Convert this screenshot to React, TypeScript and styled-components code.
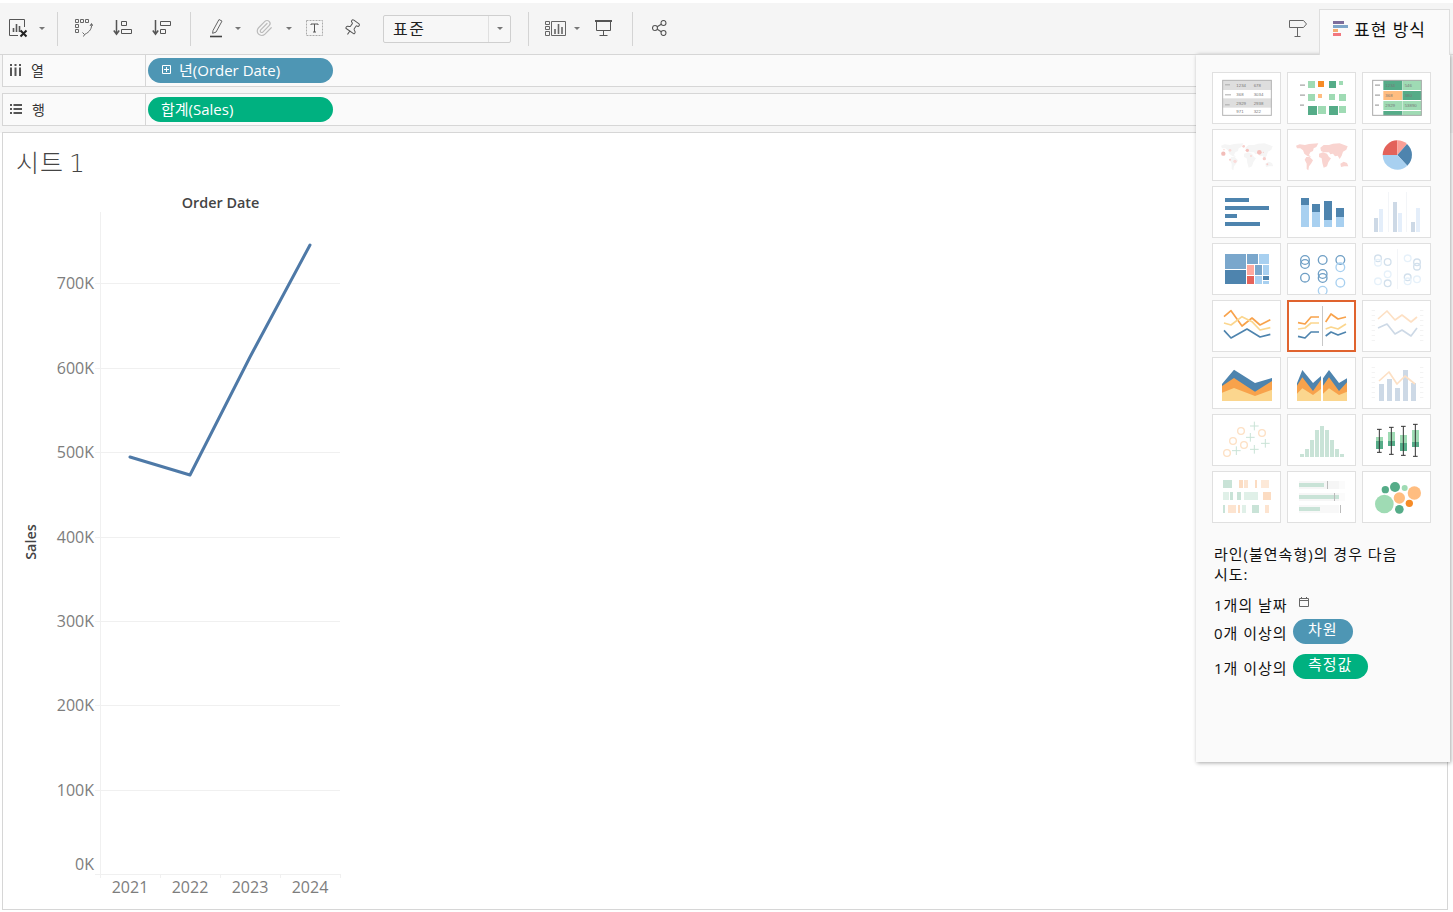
import React from "react";
import styled, { createGlobalStyle } from "styled-components";
import { Paperclip, Pin } from "lucide-react";

const FONT = `"Open Sans", "Noto Sans CJK KR", sans-serif`;
const BLUE = "#4e96b4";
const GREEN = "#00b180";
const LINE = "#d6d6d6";

const GlobalStyle = createGlobalStyle`
    html, body {
        margin: 0;
        padding: 0;
        background: #fff;
    }
    body {
        font-family: ${FONT};
        color: #222;
    }
`;

// tile artwork is traced at 3x, so every viewBox below is in 3x units
function Tile({ ox, oy, selected, children }: { ox: number; oy: number; selected?: boolean; children: React.ReactNode }) {
    return (
        <TileBox $selected={selected}>
            <svg width="67" height="50" viewBox={`${ox + 3} ${oy + 3} 201 150`}>{children}</svg>
        </TileBox>
    );
}

type Rect = [number, number, number, number, string];
const Rects = ({ items }: { items: Rect[] }) => (
    <>
        {items.map(([x, y, w, h, c], i) => (
            <rect key={i} x={x} y={y} width={w} height={h} fill={c} />
        ))}
    </>
);

const Poly = ({ d, c, w = 5 }: { d: string; c: string; w?: number }) => (
    <polyline points={d} fill="none" stroke={c} strokeWidth={w} strokeLinejoin="round" />
);

const Rings = ({ items, c, r = 13 }: { items: [number, number][]; c: string; r?: number }) => (
    <>
        {items.map(([x, y], i) => (
            <circle key={i} cx={x} cy={y} r={r} fill="none" stroke={c} strokeWidth="4" />
        ))}
    </>
);

const Dots = ({ items }: { items: [number, number, number, string][] }) => (
    <>
        {items.map(([x, y, r, c], i) => (
            <circle key={i} cx={x} cy={y} r={r} fill={c} />
        ))}
    </>
);

const SideTicks = ({ top }: { top: number }) => (
    <>
        {[0, 1, 2, 3, 4, 5, 6].map((i) => (
            <g key={i}>
                <rect x={500} y={top + i * 15} width="10" height="2" fill="#eee" />
                <rect x={645} y={top + i * 15} width="10" height="2" fill="#eee" />
            </g>
        ))}
    </>
);

const World = ({ c, dx }: { c: string; dx: number }) => (
    <g fill={c} transform={`translate(${dx} 0)`}>
        <polygon points="273,242 284,238 300,240 312,237 340,235 334,246 326,250 324,258 316,262 312,270 318,276 308,274 298,266 294,256 286,250 276,250" />
        <polygon points="304,276 314,276 324,286 318,296 312,304 310,316 305,312 305,296 299,284" />
        <polygon points="346,248 356,240 372,240 384,236 404,235 428,244 424,254 414,260 410,272 404,282 398,272 390,274 384,266 376,268 372,262 356,262 348,258" />
        <polygon points="342,266 354,262 366,266 372,276 378,280 370,292 366,304 356,308 352,294 350,280 342,276" />
        <polygon points="406,296 416,290 426,294 430,304 418,304 408,306" />
    </g>
);

const TableText = styled.text`
    font-family: "Liberation Sans", sans-serif;
    font-size: 13px;
    fill: #777;
`;

function CrossMark({ x, y }: { x: number; y: number }) {
    return <path d={`M${x - 13} ${y}h26M${x} ${y - 13}v26`} stroke="#c9e3d7" strokeWidth="3" fill="none" />;
}

function Thumbnails() {
    const o = "#f8a24b";
    const y = "#fbd68e";
    const b = "#4e84ae";
    const peach = "#fde0c4";
    const fade = "#cdd9e6";
    const gl = "#9fdbb4";
    const gd = "#55ac88";
    const sl = "#c9e3d7";
    const sf = "#e0f0e8";
    return (
        <TileGrid>
            <Tile ox={21} oy={21}>
                <Rects items={[[52, 45, 148, 30, "#dedede"], [52, 100, 148, 28, "#dedede"], [60, 58, 15, 3, "#aaa"], [60, 88, 18, 3, "#aaa"], [60, 118, 14, 3, "#aaa"]]} />
                <rect x="53" y="46" width="146" height="105" fill="none" stroke="#b4b4b4" strokeWidth="3" />
                <TableText x="94" y="66">1234</TableText>
                <TableText x="146" y="66">678</TableText>
                <TableText x="94" y="93">368</TableText>
                <TableText x="146" y="93">3034</TableText>
                <TableText x="94" y="120">2929</TableText>
                <TableText x="146" y="120">2938</TableText>
                <TableText x="94" y="144">971</TableText>
                <TableText x="146" y="144">322</TableText>
            </Tile>
            <Tile ox={246} oy={21}>
                <Rects items={[[285, 58, 15, 5, "#bbb"], [285, 88, 15, 5, "#bbb"], [285, 118, 12, 5, "#bbb"], [309, 48, 21, 21, gl], [339, 48, 18, 18, "#f68b26"], [372, 48, 21, 21, gd], [402, 48, 12, 12, gl], [309, 87, 21, 21, gl], [339, 87, 12, 12, "#ffbd80"], [372, 87, 18, 18, gl], [402, 87, 21, 21, gl], [309, 123, 27, 27, gd], [339, 123, 24, 24, gl], [372, 123, 27, 27, gd], [402, 123, 21, 21, gl]]} />
            </Tile>
            <Tile ox={471} oy={21}>
                <Rects items={[[535, 45, 57, 30, gd], [593, 45, 57, 30, gl], [535, 78, 57, 27, "#ffbd80"], [593, 78, 57, 27, gd], [535, 108, 57, 27, gl], [593, 108, 57, 27, gl], [535, 138, 57, 14, gd], [593, 138, 57, 14, gl], [510, 58, 15, 5, "#bbb"], [510, 88, 15, 5, "#bbb"], [510, 118, 12, 5, "#bbb"]]} />
                <rect x="503" y="46" width="146" height="105" fill="none" stroke="#aaa" strokeWidth="3" />
                <TableText x="541" y="66">1234</TableText>
                <TableText x="599" y="66">546</TableText>
                <TableText x="541" y="97">368</TableText>
                <TableText x="599" y="97">380</TableText>
                <TableText x="541" y="126">2929</TableText>
                <TableText x="599" y="126">53890</TableText>
            </Tile>
            <Tile ox={21} oy={192}>
                <World c="#f5f5f5" dx={-225} />
                <Dots items={[[55, 266, 6.5, "#f2bdb9"], [75, 256, 4, "#f9d9d6"], [116, 244, 4, "#f7cfcc"], [127, 256, 5, "#f5c0bc"], [163, 262, 7, "#f5c0bc"], [178, 281, 5, "#f7cfcc"], [138, 273, 3, "#f9d9d6"], [75, 284, 3, "#f7cfcc"], [90, 289, 5, "#fbdcda"], [187, 298, 3, "#f7cfcc"], [57, 254, 2, "#f7cfcc"], [175, 262, 2, "#f7cfcc"]]} />
            </Tile>
            <Tile ox={246} oy={192}>
                <World c="#f9d4d0" dx={0} />
            </Tile>
            <Tile ox={471} oy={192}>
                <path d="M577 270L577 226A44 44 0 0 0 533 270Z" fill="#e3625a" />
                <path d="M577 270L577 226A44 44 0 0 1 606 237Z" fill="#fb9f96" />
                <path d="M577 270L606 237A44 44 0 0 1 607 302Z" fill="#4e84ae" />
                <path d="M577 270L607 302A44 44 0 0 1 533 270Z" fill="#a8d0f0" />
            </Tile>
            <Tile ox={21} oy={18}>
                <Rects items={[[60, 54, 72, 12, b], [60, 78, 132, 12, b], [60, 102, 36, 12, b], [60, 126, 105, 12, b]]} />
            </Tile>
            <Tile ox={246} oy={18}>
                <Rects items={[[288, 54, 24, 21, b], [288, 75, 24, 66, "#a8d0f0"], [321, 72, 24, 24, b], [321, 96, 24, 45, "#a8d0f0"], [357, 63, 24, 57, b], [357, 120, 24, 21, "#a8d0f0"], [393, 84, 24, 27, b], [393, 111, 24, 30, "#a8d0f0"]]} />
            </Tile>
            <Tile ox={471} oy={18}>
                <Rects items={[[507, 114, 12, 42, fade], [522, 87, 12, 69, "#e4eefa"], [549, 36, 2, 120, "#eef1f5"], [564, 66, 12, 90, fade], [579, 99, 12, 57, "#e4eefa"], [603, 36, 2, 120, "#eef1f5"], [618, 126, 12, 30, fade], [633, 84, 12, 72, "#e4eefa"]]} />
            </Tile>
            <Tile ox={21} oy={189}>
                <Rects items={[[60, 222, 63, 45, "#7aa7cc"], [60, 270, 63, 42, b], [126, 222, 33, 30, "#7aa7cc"], [162, 222, 30, 30, "#a8d0f0"], [126, 255, 21, 30, "#ffa99e"], [150, 255, 21, 30, "#7aa7cc"], [174, 255, 18, 30, "#a8d0f0"], [126, 288, 21, 24, "#e5635a"], [150, 288, 21, 24, "#a8d0f0"], [174, 288, 18, 12, b], [174, 303, 18, 9, "#a8d0f0"]]} />
            </Tile>
            <Tile ox={246} oy={189}>
                <Rings c="#6f9fc5" items={[[300, 240], [300, 252], [353, 240], [353, 282], [353, 294], [300, 293], [406, 240]]} />
                <Rings c="#a8d0f0" items={[[406, 262], [353, 332], [406, 308]]} />
            </Tile>
            <Tile ox={471} oy={189}>
                <rect x="576" y="207" width="2" height="120" fill="#eef1f5" />
                <Rings c="#d2e0ec" r={10} items={[[519, 235], [548, 246], [548, 310], [636, 247], [608, 292], [636, 260]]} />
                <Rings c="#e6f1fa" r={10} items={[[519, 248], [548, 283], [519, 304], [608, 235], [608, 304], [636, 298]]} />
            </Tile>
            <Tile ox={21} oy={15}>
                <Poly c={o} d="57,65 78,47 111,93 141,69 165,90 196,74" />
                <Poly c={y} d="57,84 78,90 111,65 141,80 165,105 196,98" />
                <Poly c={b} d="57,106 78,129 126,102 165,126 196,118" />
            </Tile>
            <Tile ox={246} oy={15} selected>
                <rect x="351" y="33" width="3" height="120" fill="#c8c8c8" />
                <Poly c={o} d="279,83 300,87 318,66 342,66" />
                <Poly c={y} d="279,102 300,99 318,84 342,84" />
                <Poly c={b} d="279,124 300,129 318,111 342,111" />
                <Poly c={o} d="362,81 378,57 399,72 423,66" />
                <Poly c={y} d="362,102 378,96 399,102 423,87" />
                <Poly c={b} d="362,123 378,111 399,120 423,111" />
            </Tile>
            <Tile ox={471} oy={15}>
                <SideTicks top={45} />
                <Poly c={peach} d="519,72 546,48 570,75 591,60 618,81 636,66" />
                <Poly c={fade} d="519,99 546,87 570,117 591,105 618,123 636,99" />
            </Tile>
            <Tile ox={21} oy={186}>
                <polygon points="51,267 87,224 150,264 201,249 201,318 51,318" fill={b} />
                <polygon points="51,273 87,249 150,290 201,258 201,318 51,318" fill={o} />
                <polygon points="51,293 87,279 150,303 201,284 201,318 51,318" fill={y} />
            </Tile>
            <Tile ox={246} oy={186}>
                <polygon points="276,265 292,225 324,264 348,243 348,318 276,318" fill={b} />
                <polygon points="276,272 292,247 324,288 348,254 348,318 276,318" fill={o} />
                <polygon points="276,296 292,280 324,300 348,282 348,318 276,318" fill={y} />
                <polygon points="354,250 372,225 402,264 426,250 426,318 354,318" fill={b} />
                <polygon points="354,272 372,247 402,288 426,262 426,318 354,318" fill={o} />
                <polygon points="354,296 372,280 402,300 426,290 426,318 354,318" fill={y} />
            </Tile>
            <Tile ox={471} oy={186}>
                <SideTicks top={216} />
                <Rects items={[[522, 267, 15, 51, fade], [546, 252, 15, 66, fade], [570, 279, 15, 39, fade], [594, 225, 15, 93, fade], [618, 264, 15, 54, fade]]} />
                <Poly c={peach} d="522,258 552,231 576,267 600,243 630,267" />
            </Tile>
            <Tile ox={21} oy={12}>
                <CrossMark x={148} y={48} />
                <CrossMark x={136} y={82} />
                <CrossMark x={181} y={100} />
                <CrossMark x={94} y={122} />
                <CrossMark x={148} y={118} />
                <Rings c={peach} r={10} items={[[108, 63], [171, 69], [84, 93], [117, 105], [66, 129]]} />
            </Tile>
            <Tile ox={246} oy={12}>
                <Rects items={[[285, 132, 12, 9, sl], [300, 117, 12, 24, sl], [315, 90, 12, 51, sl], [330, 60, 12, 81, sl], [345, 48, 12, 93, sl], [360, 60, 12, 81, sl], [375, 90, 12, 51, sl], [390, 117, 12, 24, sl], [405, 132, 12, 9, sl]]} />
            </Tile>
            <Tile ox={471} oy={12}>
                <Rects items={[[513, 81, 21, 12, gl], [513, 93, 21, 24, gd], [549, 66, 21, 27, gl], [549, 93, 21, 15, gd], [585, 75, 21, 24, gl], [585, 99, 21, 24, gd], [621, 60, 21, 36, gl], [621, 96, 21, 15, gd]]} />
                <path d="M516 58h14M523 58v69M516 127h14M552 52h14M559 52v81M552 133h14M588 49h14M595 49v87M588 136h14M624 43h14M631 43v96M624 139h14" stroke="#333" strokeWidth="3" fill="none" />
            </Tile>
            <Tile ox={21} oy={183}>
                <Rects items={[[54, 210, 27, 24, sl], [102, 210, 12, 24, "#fcdcc2"], [117, 210, 12, 24, "#fce4d0"], [150, 210, 6, 24, "#fcdcc2"], [168, 210, 24, 24, "#fde9d8"], [54, 246, 18, 24, sf], [75, 246, 9, 24, sl], [96, 246, 12, 24, sl], [117, 246, 42, 24, sf], [174, 246, 24, 24, "#fcdcc2"], [54, 285, 6, 24, sl], [69, 285, 24, 24, "#fde4d0"], [99, 285, 6, 24, "#fcdcc2"], [111, 285, 12, 24, sf], [141, 285, 21, 24, sl], [180, 285, 12, 24, "#fde4d0"]]} />
            </Tile>
            <Tile ox={246} oy={183}>
                <Rects items={[[282, 213, 120, 24, "#f6f6f6"], [402, 213, 18, 24, "#fbfbfb"], [282, 219, 75, 12, sl], [366, 213, 3, 24, "#bbb"], [282, 249, 120, 24, "#f6f6f6"], [402, 249, 18, 24, "#fbfbfb"], [282, 255, 120, 12, sl], [387, 249, 3, 24, "#bbb"], [282, 285, 120, 24, "#f8f8f8"], [282, 291, 63, 12, sl], [405, 285, 3, 24, "#bbb"]]} />
            </Tile>
            <Tile ox={471} oy={183}>
                <Dots items={[[538, 282, 28, gl], [583, 264, 17, "#ffbd80"], [628, 249, 20, "#ffbd80"], [570, 231, 15, gd], [541, 239, 11, gd], [599, 234, 9, gl], [613, 280, 11, "#f68b26"], [583, 298, 13, gd]]} />
            </Tile>
        </TileGrid>
    );
}

function ChartAxes() {
    const ticks: [string, number][] = [["700K", 283.5], ["600K", 368.5], ["500K", 452.5], ["400K", 537.5], ["300K", 621.5], ["200K", 705.5], ["100K", 790.5]];
    const years: [string, number][] = [["2021", 130], ["2022", 190], ["2023", 250], ["2024", 310]];
    return (
        <ChartSvg width="345" height="725" viewBox="3 185 345 725">
            <AxisTitle x="220.5" y="208" textAnchor="middle">Order Date</AxisTitle>
            <AxisTitle x="36" y="542" textAnchor="middle" transform="rotate(-90 36 542)">Sales</AxisTitle>
            <line x1="100.5" y1="212" x2="100.5" y2="878" stroke="#f0f0f0" />
            {ticks.map(([label, y]) => (
                <g key={label}>
                    <line x1="95" y1={y} x2="340" y2={y} stroke="#f0f0f0" />
                    <AxisLabel x="94" y={y + 5.5} textAnchor="end">{label}</AxisLabel>
                </g>
            ))}
            <line x1="95" y1="874.5" x2="340" y2="874.5" stroke="#f0f0f0" />
            <AxisLabel x="94" y="870" textAnchor="end">0K</AxisLabel>
            {[160, 220, 280, 340].map((x) => (
                <line key={x} x1={x + 0.5} y1="874" x2={x + 0.5} y2="878" stroke="#f0f0f0" />
            ))}
            {years.map(([label, x]) => (
                <AxisLabel key={label} x={x} y="893" textAnchor="middle">{label}</AxisLabel>
            ))}
            <polyline points="130,457 190,475 250,357 310,245" fill="none" stroke="#4e79a7" strokeWidth="3" strokeLinecap="round" strokeLinejoin="round" />
        </ChartSvg>
    );
}

const Caret = () => (
    <svg width="6" height="3" viewBox="0 0 6 3">
        <path d="M0 0h6L3 3Z" fill="#777" />
    </svg>
);

const ClearIcon = () => (
    <svg width="20" height="20" viewBox="0 0 20 20" fill="none">
        <path d="M15.5 9V1.5H.5v16H9" stroke="#555" />
        <path d="M4.5 14V10M7.5 14V6M10.5 14V8" stroke="#555" strokeWidth="1.6" />
        <path d="M11.5 12.5l6 6M17.5 12.5l-6 6" stroke="#222" strokeWidth="2" />
    </svg>
);

const SwapIcon = () => (
    <svg width="18" height="18" viewBox="0 0 18 18" fill="none" stroke="#666">
        <path d="M.5.5h3v3h-3zM5.5.5h3v3h-3zM10.5.5h3v3h-3zM.5 5.5h3v3h-3zM.5 10.5h3v3h-3z" />
        <path d="M16.5 5c.6 4-1.5 8-7 10.5M15 7l1.5-2.5L18 7M7.5 13.5l2 2-1 2" />
    </svg>
);

const SortIcon = ({ up }: { up?: boolean }) => (
    <svg width="19" height="16" viewBox="0 0 19 16" fill="none" stroke="#555">
        <path d="M3.5 0v14M.8 10.5l2.7 3.8 2.7-3.8" strokeWidth="1.5" />
        {up ? (
            <path d="M8.5 1.5h5v4h-5zM8.5 9.5h10v4h-10z" />
        ) : (
            <path d="M8.5 1.5h10v4h-10zM8.5 9.5h5v4h-5z" />
        )}
    </svg>
);

const HighlightIcon = () => (
    <svg width="13" height="20" viewBox="0 0 13 20" fill="none">
        <path d="M3 12.5L9 1.5l3 1.6-6 11-3.4 1.2z" stroke="#666" />
        <path d="M0 18.5h12" stroke="#444" strokeWidth="1.6" />
    </svg>
);

const TextBoxIcon = () => (
    <svg width="17" height="16" viewBox="0 0 17 16" fill="none">
        <rect x=".5" y=".5" width="16" height="15" stroke="#aaa" strokeDasharray="2 1" />
        <path d="M5 5V4h7v1M8.5 4v8M7 12h3" stroke="#555" />
    </svg>
);

const ShowMeChartIcon = () => (
    <svg width="21" height="15" viewBox="0 0 21 15" fill="none" stroke="#666">
        <path d="M.5.5h4v3h-4zM.5 5.5h4v3h-4zM.5 10.5h4v4h-4zM6.5.5h14v14h-14z" />
        <path d="M10 13V8M13.5 13V3M17 13V6" strokeWidth="1.6" />
    </svg>
);

const PresentIcon = () => (
    <svg width="17" height="16" viewBox="0 0 17 16" fill="none" stroke="#555">
        <path d="M0 1h17" strokeWidth="2" />
        <path d="M1.5 1v9.5h14V1M8.5 10.5V15M4.5 15.5h8" />
    </svg>
);

const ShareIcon = () => (
    <svg width="15" height="16" viewBox="0 0 15 16" fill="none" stroke="#555" strokeWidth="1.1">
        <circle cx="3" cy="8" r="2.5" />
        <circle cx="11.5" cy="3" r="2.5" />
        <circle cx="11.5" cy="13" r="2.5" />
        <path d="M5.2 6.8l4.1-2.5M5.2 9.2l4.1 2.5" />
    </svg>
);

const GuideIcon = () => (
    <svg width="18" height="18" viewBox="0 0 18 18" fill="none" stroke="#666">
        <path d="M.5 1.5h14l3 3.5-3 3.5H.5zM8.5 8.5v8.5M5.5 17.5h6" />
    </svg>
);

const ShowMeTabIcon = () => (
    <svg width="15" height="15" viewBox="0 0 15 15">
        <rect width="11" height="3" fill="#7d6d9b" />
        <rect y="4" width="15" height="3" fill="#7ea6c9" />
        <rect y="8" width="5" height="3" fill="#f4ac72" />
        <rect y="12" width="8" height="3" fill="#f2777e" />
    </svg>
);

const ColumnsIcon = () => (
    <svg width="11" height="12" viewBox="0 0 11 12" fill="#555">
        <rect x="0" y="0" width="2" height="2" />
        <rect x="4.5" y="0" width="2" height="2" />
        <rect x="9" y="0" width="2" height="2" />
        <rect x="0" y="3.5" width="2" height="8.5" />
        <rect x="4.5" y="3.5" width="2" height="8.5" />
        <rect x="9" y="3.5" width="2" height="8.5" />
    </svg>
);

const RowsIcon = () => (
    <svg width="12" height="10" viewBox="0 0 12 10" fill="#555">
        <rect x="0" y="0" width="2" height="2" />
        <rect x="3.5" y="0" width="8.5" height="2" />
        <rect x="0" y="4" width="2" height="2" />
        <rect x="3.5" y="4" width="8.5" height="2" />
        <rect x="0" y="8" width="2" height="2" />
        <rect x="3.5" y="8" width="8.5" height="2" />
    </svg>
);

const ExpandIcon = () => (
    <svg width="9" height="9" viewBox="0 0 9 9" fill="none" stroke="#fff">
        <path d="M.5.5h8v8h-8zM4.5 2v5M2 4.5h5" />
    </svg>
);

const CalendarIcon = () => (
    <svg width="10" height="10" viewBox="0 0 10 10" fill="none" stroke="#666">
        <path d="M.5 1.5h9v8h-9zM.5 3.5h9M2.5 0v2M7.5 0v2" />
    </svg>
);

function App(): React.ReactElement {
    return (
        <Page>
            <GlobalStyle />
            <Toolbar>
                <Slot $w={37}><ClearIcon /></Slot>
                <Slot $w={10}><Caret /></Slot>
                <Divider $before={10} $after={6} />
                <Slot $w={39}><SwapIcon /></Slot>
                <Slot $w={39}><SortIcon up /></Slot>
                <Slot $w={39}><SortIcon /></Slot>
                <Divider $before={9} $after={9} />
                <Slot $w={33}><HighlightIcon /></Slot>
                <Slot $w={10}><Caret /></Slot>
                <Slot $w={41}><Paperclip size={18} color="#bbb" strokeWidth={1.6} /></Slot>
                <Slot $w={9}><Caret /></Slot>
                <Slot $w={43}><TextBoxIcon /></Slot>
                <Slot $w={31}><Pin size={18} color="#555" strokeWidth={1.3} style={{ transform: "rotate(35deg)" }} /></Slot>
                <FitSelect>
                    <FitValue>표준</FitValue>
                    <FitArrow><Caret /></FitArrow>
                </FitSelect>
                <Divider $before={17} $after={16} />
                <Slot $w={21}><ShowMeChartIcon /></Slot>
                <Slot $w={22}><Caret /></Slot>
                <Slot $w={31}><PresentIcon /></Slot>
                <Divider $before={13} $after={0} />
                <Slot $w={52}><ShareIcon /></Slot>
                <Spacer />
                <Slot $w={42}><GuideIcon /></Slot>
                <ShowMeTab>
                    <ShowMeTabIcon />
                    <span>표현 방식</span>
                </ShowMeTab>
            </Toolbar>

            <Shelf $tall={false}>
                <ShelfLabel><ColumnsIcon /><span>열</span></ShelfLabel>
                <ShelfBody>
                    <FieldPill $color={BLUE} $indent={14} $gap={8}>
                        <ExpandIcon />
                        <span>년(Order Date)</span>
                    </FieldPill>
                </ShelfBody>
            </Shelf>
            <Shelf $tall>
                <ShelfLabel><RowsIcon /><span>행</span></ShelfLabel>
                <ShelfBody>
                    <FieldPill $color={GREEN} $indent={13} $gap={0}>
                        <span>합계(Sales)</span>
                    </FieldPill>
                </ShelfBody>
            </Shelf>

            <View>
                <SheetTitle>시트 1</SheetTitle>
                <ChartAxes />
            </View>

            <ShowMePanel>
                <Thumbnails />
                <Hint>라인(불연속형)의 경우 다음 시도:</Hint>
                <Rule $height={28}>
                    <span>1개의 날짜</span>
                    <CalendarSlot><CalendarIcon /></CalendarSlot>
                </Rule>
                <Rule $height={35}>
                    <span>0개 이상의</span>
                    <HintPill $color={BLUE} $width={60}>차원</HintPill>
                </Rule>
                <Rule $height={35}>
                    <span>1개 이상의</span>
                    <HintPill $color={GREEN} $width={75}>측정값</HintPill>
                </Rule>
            </ShowMePanel>
        </Page>
    );
}

const Page = styled.div`
    position: relative;
    width: 1453px;
    height: 912px;
    overflow: hidden;
    padding-top: 3px;
    box-sizing: border-box;
    background: linear-gradient(#f5f5f5 130px, #fff 130px);
    background-origin: content-box;
    background-repeat: no-repeat;
`;

const Toolbar = styled.div`
    position: relative;
    z-index: 3;
    display: flex;
    align-items: center;
    height: 52px;
    box-sizing: border-box;
    padding-right: 3px;
    border-bottom: 1px solid ${LINE};
`;

const Slot = styled.div<{ $w: number }>`
    display: flex;
    align-items: center;
    justify-content: center;
    flex: none;
    width: ${(p) => p.$w}px;
    height: 100%;
    padding-bottom: 1px;
    box-sizing: border-box;
`;

const Divider = styled.div<{ $before: number; $after: number }>`
    flex: none;
    width: 1px;
    height: 34px;
    margin: 0 ${(p) => p.$after}px 0 ${(p) => p.$before}px;
    background: #d4d4d4;
`;

const Spacer = styled.div`
    flex: 1;
`;

const FitSelect = styled.div`
    display: flex;
    flex: none;
    width: 128px;
    height: 28px;
    margin-left: 16px;
    box-sizing: border-box;
    border: 1px solid #cfcfcf;
    border-radius: 2px;
    background: #f7f7f7;
`;

const FitValue = styled.div`
    flex: 1;
    padding-left: 9px;
    font-size: 16px;
    letter-spacing: 1.5px;
    line-height: 26px;
    color: #222;
`;

const FitArrow = styled.div`
    display: flex;
    align-items: center;
    justify-content: center;
    width: 21px;
    border-left: 1px solid #e0e0e0;
`;

const ShowMeTab = styled.div`
    display: flex;
    align-items: center;
    gap: 6px;
    flex: none;
    align-self: flex-end;
    width: 131px;
    height: 46px;
    margin-bottom: -1px;
    padding: 0 0 8px 13px;
    box-sizing: border-box;
    border: 1px solid #dedede;
    border-bottom: none;
    background: #fafafa;
    font-size: 17px;
    letter-spacing: 1px;
    color: #111;
`;

const Shelf = styled.div<{ $tall: boolean }>`
    display: flex;
    height: ${(p) => (p.$tall ? 33 : 32)}px;
    margin: 0 5px 6px 2px;
    box-sizing: border-box;
    border: 1px solid ${LINE};
    border-top-width: ${(p) => (p.$tall ? 1 : 0)}px;
    background: #fafafa;
`;

const ShelfLabel = styled.div`
    display: flex;
    align-items: center;
    gap: 10px;
    flex: none;
    width: 143px;
    padding: 0 0 2px 7px;
    box-sizing: border-box;
    border-right: 1px solid ${LINE};
    font-size: 14px;
    color: #333;
`;

const ShelfBody = styled.div`
    display: flex;
    align-items: center;
    flex: 1;
    padding-left: 2px;
`;

const FieldPill = styled.div<{ $color: string; $indent: number; $gap: number }>`
    display: flex;
    align-items: center;
    gap: ${(p) => p.$gap}px;
    width: 185px;
    height: 25px;
    padding: 0 0 3px ${(p) => p.$indent}px;
    box-sizing: border-box;
    border-radius: 13px;
    background: ${(p) => p.$color};
    font-size: 15px;
    color: #fff;
`;

const View = styled.div`
    height: 778px;
    margin: 0 5px 0 2px;
    box-sizing: border-box;
    border: 1px solid ${LINE};
    background: #fff;
`;

const SheetTitle = styled.div`
    height: 52px;
    padding: 13px 0 0 13px;
    box-sizing: border-box;
    font-family: "DejaVu Sans", "Noto Sans CJK KR", sans-serif;
    font-size: 25px;
    font-weight: 300;
    letter-spacing: 1px;
    word-spacing: -4px;
    line-height: 36px;
    color: #444;
`;

const ChartSvg = styled.svg`
    display: block;
`;

const AxisTitle = styled.text`
    font-family: "Open Sans", sans-serif;
    font-size: 14.4px;
    font-weight: 600;
    fill: #444;
`;

const AxisLabel = styled.text`
    font-family: "Open Sans", sans-serif;
    font-size: 16px;
    fill: #7d7d7d;
`;

const ShowMePanel = styled.div`
    position: absolute;
    z-index: 2;
    top: 54px;
    left: 1196px;
    width: 254px;
    height: 708px;
    padding: 18px 0 0 16px;
    box-sizing: border-box;
    background: #fafafa;
    box-shadow: 1px 1px 4px rgba(0, 0, 0, 0.35);
    font-size: 15px;
    color: #111;
`;

const TileGrid = styled.div`
    display: grid;
    grid-template-columns: repeat(3, 69px);
    grid-auto-rows: 52px;
    gap: 5px 6px;
`;

const TileBox = styled.div<{ $selected?: boolean }>`
    box-sizing: border-box;
    border: 1px solid #e0e0e0;
    background: #fff;
    outline: ${(p) => (p.$selected ? "2px solid #e0632e" : "none")};
    outline-offset: -2px;

    svg {
        display: block;
    }
`;

const Hint = styled.div`
    width: 205px;
    margin: 21px 0 11px 2px;
    line-height: 20px;
    letter-spacing: 1px;
    word-break: keep-all;
`;

const Rule = styled.div<{ $height: number }>`
    display: flex;
    align-items: flex-start;
    gap: 5px;
    height: ${(p) => p.$height}px;
    margin-left: 2px;
    line-height: 20px;
    letter-spacing: 1px;
`;

const CalendarSlot = styled.div`
    margin: 2px 0 0 6px;
    line-height: 0;
`;

const HintPill = styled.div<{ $color: string; $width: number }>`
    width: ${(p) => p.$width}px;
    height: 25px;
    margin-top: -4px;
    border-radius: 13px;
    background: ${(p) => p.$color};
    color: #fff;
    font-size: 15px;
    line-height: 21px;
    text-align: center;
`;

export default App;
